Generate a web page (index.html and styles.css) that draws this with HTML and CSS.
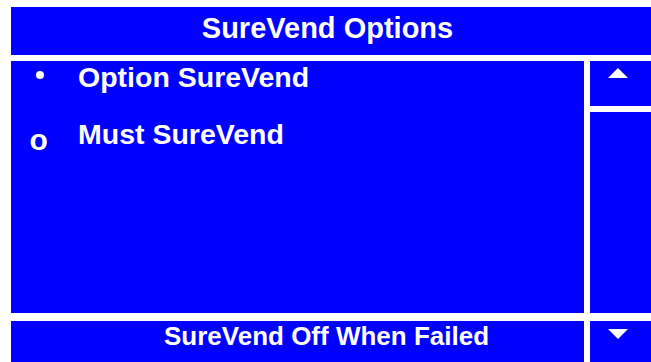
FILE: index.html
```html
<!DOCTYPE html>
<html>
<head>
<meta charset="utf-8">
<link rel="stylesheet" href="styles.css">
</head>
<body>
<div class="screen">
  <div class="header">SureVend Options</div>
  <div class="main-row">
    <div class="panel">
      <div class="row">
        <div class="mark"><span class="dot"></span></div>
        <div class="label">Option SureVend</div>
      </div>
      <div class="row">
        <div class="mark"><span class="ring">o</span></div>
        <div class="label">Must SureVend</div>
      </div>
    </div>
    <div class="scroll">
      <div class="btn up">
        <svg class="tri up-tri" width="20" height="10" viewBox="0 0 20 10"><polygon points="10,0 20,10 0,10" fill="#fff"/></svg>
      </div>
      <div class="track"></div>
    </div>
  </div>
  <div class="bottom-row">
    <div class="footer">SureVend Off When Failed</div>
    <div class="btn down">
      <svg class="tri down-tri" width="20" height="10" viewBox="0 0 20 10"><polygon points="0,0 20,0 10,10" fill="#fff"/></svg>
    </div>
  </div>
</div>
</body>
</html>
```
FILE: styles.css
```css
html, body {
  margin: 0;
  padding: 0;
  background: #ffffff;
}
body {
  width: 651px;
  height: 362px;
  overflow: hidden;
  font-family: "Liberation Sans", Arial, sans-serif;
  font-weight: bold;
  color: #ffffff;
}
.screen {
  padding: 7px 0 0 11px;
  display: flex;
  flex-direction: column;
}
.header {
  height: 42px;
  padding-bottom: 6px;
  line-height: 42px;
  font-size: 29px;
  background: #0000ff;
  text-align: center;
  padding-right: 7px;
}
.main-row {
  margin-top: 6px;
  display: flex;
  gap: 6px;
  height: 252px;
}
.panel {
  width: 573px;
  background: #0000ff;
  display: flex;
  flex-direction: column;
  gap: 25px;
}
.row {
  display: flex;
  align-items: flex-start;
  height: 32px;
}
.mark {
  width: 67px;
  flex: none;
  display: flex;
  align-items: flex-start;
}
.dot {
  display: block;
  width: 8px;
  height: 8px;
  border-radius: 50%;
  background: #ffffff;
  margin-left: 25px;
  margin-top: 10px;
}
.ring {
  display: block;
  font-size: 30px;
  line-height: 32px;
  margin-left: 18.5px;
  margin-top: 6px;
}
.label {
  font-size: 28.5px;
  line-height: 32px;
}
.scroll {
  width: 61px;
  display: flex;
  flex-direction: column;
  gap: 6px;
}
.btn {
  background: #0000ff;
}
.up {
  height: 45px;
}
.track {
  flex: 1;
  background: #0000ff;
}
.tri {
  display: block;
  margin-left: 18px;
}
.up-tri {
  margin-top: 7px;
}
.down-tri {
  margin-top: 8px;
}
.bottom-row {
  margin-top: 8px;
  display: flex;
  gap: 6px;
  height: 41px;
}
.footer {
  width: 515px;
  padding-left: 58px;
  background: #0000ff;
  text-align: center;
  font-size: 26px;
  line-height: 30px;
}
.down {
  width: 61px;
}
```
